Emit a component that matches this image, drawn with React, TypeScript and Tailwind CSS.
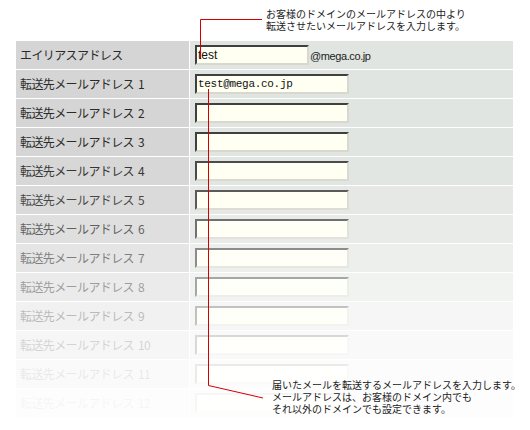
import React from 'react';

const font = { fontFamily: '"Noto Sans CJK JP", "Liberation Sans", sans-serif' };

const rows = [
  { label: 'エイリアスアドレス', num: '', value: 'test', alias: true },
  ...Array.from({ length: 12 }, (_, i) => ({
    label: '転送先メールアドレス',
    num: String(i + 1),
    value: i === 0 ? 'test@mega.co.jp' : '',
    alias: false,
  })),
];

// fade toward the bottom of the picture
const fade = [1, 1, 1, 1, 0.94, 0.86, 0.74, 0.6, 0.46, 0.32, 0.2, 0.1, 0.04];

const Field: React.FC<{ value: string; wide: boolean }> = ({ value, wide }) => (
  <div
    className={`h-[20px] ${wide ? 'w-[154px]' : 'w-[114px]'} bg-[#fffff2] border-2 border-t-[#404040] border-l-[#404040] border-b-[#d8d8d0] border-r-[#d8d8d0] flex items-center pl-[1px] text-[12px] text-[#111]`}
  >
    {wide ? (
      <span className="text-[11px] tracking-[-0.3px]" style={{ fontFamily: '"Liberation Mono", monospace' }}>
        {value}
      </span>
    ) : (
      <span style={{ fontFamily: '"Liberation Sans", sans-serif' }}>{value}</span>
    )}
  </div>
);

export default function App() {
  return (
    <div className="relative w-[530px] h-[430px] bg-white overflow-hidden" style={font}>
      <div className="h-[41px] pl-[266px] pt-[8px] text-[10px] leading-[12px] text-[#222]">
        <div>お客様のドメインのメールアドレスの中より</div>
        <div>転送させたいメールアドレスを入力します。</div>
      </div>

      <div className="ml-[16px] w-[497px] flex flex-col">
        {rows.map((row, i) => (
          <div key={i} className="flex h-[29px] border-b border-white" style={{ opacity: fade[i] }}>
            <div className="w-[173px] bg-[#d5d5d5] flex items-center pl-[4px] text-[12px] tracking-[-0.6px] text-[#2a2a2a]">
              <span>{row.label}</span>
              {row.num && <span className="ml-[4px]">{row.num}</span>}
            </div>
            <div className="w-px bg-white" />
            <div className="flex-1 bg-[#e1e5e1] flex items-start pt-[4px] pl-[5px]">
              <Field value={row.value} wide={!row.alias} />
              {row.alias && (
                <span
                  className="ml-[1px] mt-[3px] text-[11px] tracking-[-0.4px] text-[#222]"
                  style={{ fontFamily: '"Liberation Sans", sans-serif' }}
                >
                  @mega.co.jp
                </span>
              )}
            </div>
          </div>
        ))}
      </div>

      <svg className="absolute inset-0 pointer-events-none" width="530" height="430">
        <polyline points="200.5,58 200.5,19.5 262,19.5" fill="none" stroke="#d40000" strokeWidth="1" />
        <polyline points="208.5,89 208.5,385.5 263,398" fill="none" stroke="#d40000" strokeWidth="1" />
      </svg>

      <div className="absolute left-[272px] top-[379px] text-[10px] leading-[12px] text-[#222]">
        <div>届いたメールを転送するメールアドレスを入力します。</div>
        <div>メールアドレスは、お客様のドメイン内でも</div>
        <div>それ以外のドメインでも設定できます。</div>
      </div>
    </div>
  );
}
